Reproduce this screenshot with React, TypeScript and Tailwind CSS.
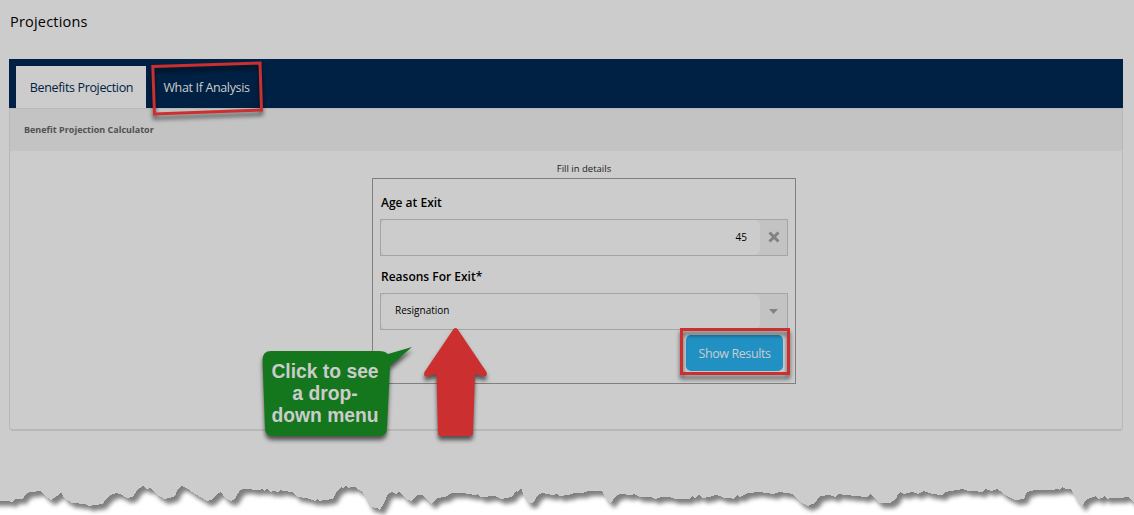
const tornEdge =
  '0,501 7,501 12,502 16,499 23,499 25,495 30,492 41,491 44,495 51,500 57,496 61,492 64,498 72,503 85,504 89,506 95,505 103,504 106,499 110,495 116,493 122,495 127,498 133,497 137,490 143,486 147,489 151,488 156,494 164,499 170,498 175,496 178,489 182,486 188,489 195,494 207,501 213,499 217,494 221,492 225,498 231,501 235,499 240,490 244,489 260,490 262,489 264,491 267,489 270,492 273,491 278,492 281,490 283,491 293,492 297,497 306,498 315,501 317,499 319,501 325,500 333,499 337,491 341,487 343,488 346,486 348,488 352,487 355,487 358,490 362,491 370,507 377,508 380,510 384,503 388,494 392,492 396,494 399,492 407,500 412,501 417,495 422,495 427,500 432,504 437,498 445,497 452,493 463,493 475,495 478,494 480,497 495,496 501,499 512,497 516,491 518,492 521,488 524,496 528,503 533,503 538,495 542,493 552,495 557,494 560,496 568,495 574,493 583,493 588,491 602,491 606,499 611,503 616,496 620,494 632,495 634,494 640,497 651,497 655,499 661,497 670,497 675,499 689,499 692,496 695,498 699,495 702,498 710,497 715,495 720,496 724,498 730,498 733,499 737,495 740,497 748,493 760,492 766,493 773,494 779,492 793,494 800,502 808,506 815,503 820,496 830,495 835,497 838,494 855,496 867,497 870,494 875,499 880,503 890,503 896,499 898,494 900,492 904,494 912,492 918,494 924,491 932,494 942,495 945,492 963,489 968,491 973,491 982,492 985,489 991,491 997,489 1000,491 1005,495 1015,500 1024,499 1027,492 1035,490 1052,490 1058,489 1060,490 1062,487 1066,489 1071,489 1075,497 1082,507 1085,501 1090,498 1096,496 1098,499 1102,498 1104,496 1107,499 1110,498 1120,498 1128,497 1134,503 1150,503';

function TornPaper() {
  return (
    <svg className="absolute inset-0" width="1134" height="515" viewBox="0 0 1134 515">
      <defs>
        <filter
          id="tear-shadow"
          filterUnits="userSpaceOnUse"
          x="-20"
          y="400"
          width="1180"
          height="140"
          colorInterpolationFilters="sRGB"
        >
          <feDropShadow dx="4" dy="5" stdDeviation="2.1" floodColor="#000" floodOpacity="0.5" />
        </filter>
      </defs>
      <polygon
        points={`-20,430 -20,501 ${tornEdge} 1150,430`}
        fill="#ccc"
        filter="url(#tear-shadow)"
        shapeRendering="crispEdges"
      />
      <rect width="1134" height="440" fill="#ccc" />
    </svg>
  );
}

function Annotations() {
  return (
    <>
      <svg className="pointer-events-none absolute inset-0" width="1134" height="515" viewBox="0 0 1134 515">
        <defs>
          <filter
            id="mark-shadow"
            x="-20%"
            y="-20%"
            width="150%"
            height="150%"
            colorInterpolationFilters="sRGB"
          >
            <feDropShadow dx="0" dy="4" stdDeviation="2" floodColor="#000" floodOpacity="0.6" />
          </filter>
        </defs>
        <polygon
          points="152.8,66.5 260,63 261.5,110 154.5,114"
          fill="none"
          stroke="#cc2f2f"
          strokeWidth="3"
          filter="url(#mark-shadow)"
        />
        <rect
          x="681.5"
          y="329.5"
          width="107"
          height="44"
          fill="none"
          stroke="#cc2f2f"
          strokeWidth="3"
          filter="url(#mark-shadow)"
        />
        <path
          d="M271 351H379Q385 351 388 354L412 347L390 366L387 428Q387 436 379 436H273Q265 436 265 428L262.500 360Q262.500 351 271 351Z"
          fill="#14771e"
          filter="url(#mark-shadow)"
        />
        <path
          d="M453.500 329Q455.500 327 457.500 329L486.500 372Q488 376 484 376.500L475 374L473 433Q473 436 470 436H441Q438 436 438 433L436.500 374L427 376.500Q423 377 424.500 372Z"
          fill="#cc2f2f"
          filter="url(#mark-shadow)"
        />
      </svg>
      <div className="absolute top-[361px] left-[263px] w-[124px] text-center font-['Liberation_Sans',sans-serif] text-[19.3px] leading-[22px] font-bold text-[#ccc]">
        Click to see
        <br />a drop-
        <br />
        down menu
      </div>
    </>
  );
}

function Field({ value, numeric }: { value: string; numeric?: boolean }) {
  return (
    <div className="flex h-[37px] border border-[#a5a5a5] bg-[#c3c3c3]">
      <div
        className={
          numeric
            ? 'flex flex-1 items-center justify-end rounded-md bg-[#ccc] pr-[13px] pb-0.5'
            : 'flex flex-1 items-center rounded-md bg-[#ccc] pb-[3px] pl-3.5'
        }
      >
        <span className="text-[10px] leading-4 text-black">{value}</span>
      </div>
      <div className="flex w-[27px] items-center justify-center">
        {numeric ? (
          <svg className="mb-0.5" width="12" height="12" viewBox="0 0 12 12">
            <path d="M1.500 1.500L10.500 10.500M10.500 1.500L1.500 10.500" stroke="#828282" strokeWidth="3" />
          </svg>
        ) : (
          <svg width="9" height="5" viewBox="0 0 9 5">
            <path d="M0 0H9L4.500 5Z" fill="#828282" />
          </svg>
        )}
      </div>
    </div>
  );
}

export default function App() {
  return (
    <div className="relative h-[515px] w-[1134px] overflow-hidden bg-white font-['Open_Sans',sans-serif]">
      <TornPaper />
      <main className="relative pr-[11px] pl-[9px]">
        <h1 className="flex h-[59px] items-start pt-3 pl-px text-[14.5px] leading-5 font-medium tracking-[0.2px] text-black">
          Projections
        </h1>
        <nav className="flex h-[49px] items-end bg-[#002143] pl-[7px] text-[12.5px] tracking-[-0.35px]">
          <button className="h-[42px] w-[130px] bg-[#ccc] pt-0.5 pl-px text-[#002143]">Benefits Projection</button>
          <button className="ml-[5px] h-[42px] w-[110px] pt-0.5 pl-px text-[#ccc]">What If Analysis</button>
        </nav>
        <section className="h-[323px] rounded-b border border-b-2 border-[#b8b8b8]">
          <h2 className="flex h-[42px] items-center bg-[#c3c3c3] pl-3.5 text-[9px] font-bold text-[#515151]">
            Benefit Projection Calculator
          </h2>
          <p className="mt-[9px] ml-[362px] w-[424px] text-center text-[9.5px] leading-[18px] text-[#222]">
            Fill in details
          </p>
          <form className="ml-[362px] h-[206px] w-[424px] border border-[#808080] px-[7px] pt-4">
            <label className="block h-6 pl-px text-[12px] leading-4 font-semibold text-black">Age at Exit</label>
            <Field value="45" numeric />
            <label className="mt-[13px] block h-6 pl-px text-[12px] leading-4 font-semibold text-black">
              Reasons For Exit*
            </label>
            <Field value="Resignation" />
            <div className="mt-[5px] flex justify-end pr-[5px]">
              <button
                type="button"
                className="h-9 w-[97px] rounded-[5px] bg-[#2191c4] pt-0.5 text-[12.5px] tracking-[-0.4px] text-[#ccc]"
              >
                Show Results
              </button>
            </div>
          </form>
        </section>
      </main>
      <Annotations />
    </div>
  );
}
